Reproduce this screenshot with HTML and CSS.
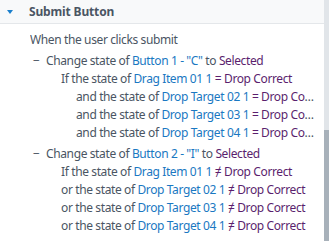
FILE: index.html
```html
<!DOCTYPE html>
<html>
<head>
<meta charset="utf-8">
<link rel="stylesheet" href="styles.css">
</head>
<body>
<div class="page">
  <div class="main">
    <div class="header">
      <span class="caret"></span>
      <span class="title">Submit Button</span>
    </div>
    <div class="body">
      <div class="line l0">When the user clicks submit</div>
      <div class="group">
        <div class="line l1"><span class="dash">−</span>Change state of <span class="obj">Button 1 - "C"</span> to <span class="val">Selected</span></div>
        <div class="line l2">If the state of <span class="obj">Drag Item 01 1</span> <span class="val">= Drop Correct</span></div>
        <div class="line l3">and the state of <span class="obj">Drop Target 02 1</span> <span class="val">= Drop Correct</span></div>
        <div class="line l3">and the state of <span class="obj">Drop Target 03 1</span> <span class="val">= Drop Correct</span></div>
        <div class="line l3">and the state of <span class="obj">Drop Target 04 1</span> <span class="val">= Drop Correct</span></div>
      </div>
      <div class="group">
        <div class="line l1"><span class="dash">−</span>Change state of <span class="obj">Button 2 - "I"</span> to <span class="val">Selected</span></div>
        <div class="line l2">If the state of <span class="obj">Drag Item 01 1</span> <span class="val">≠ Drop Correct</span></div>
        <div class="line l2">or the state of <span class="obj">Drop Target 02 1</span> <span class="val">≠ Drop Correct</span></div>
        <div class="line l2">or the state of <span class="obj">Drop Target 03 1</span> <span class="val">≠ Drop Correct</span></div>
        <div class="line l2">or the state of <span class="obj">Drop Target 04 1</span> <span class="val">≠ Drop Correct</span></div>
      </div>
    </div>
  </div>
  <div class="scrollbar"><div class="thumb"></div></div>
</div>
</body>
</html>
```

FILE: styles.css
```css
html, body {
  margin: 0;
  padding: 0;
  background: #ffffff;
}
body {
  font-family: "Noto Sans", "Open Sans", sans-serif;
  font-size: 12px;
  letter-spacing: -0.38px;
  color: #4a5563;
}
.page {
  display: flex;
  width: 329px;
  height: 241px;
  overflow: hidden;
}
.main {
  flex: 1;
  min-width: 0;
}
.header {
  background: #f8f9fa;
  border-bottom: 1px solid #e4e7ea;
  display: flex;
  align-items: center;
  box-sizing: border-box;
  height: 24px;
}
.caret {
  width: 0;
  height: 0;
  margin-left: 7px;
  border-left: 3.5px solid transparent;
  border-right: 3.5px solid transparent;
  border-top: 4px solid #1b7fcc;
}
.title {
  margin-left: 16px;
  font-weight: bold;
  letter-spacing: -0.15px;
  color: #4a5563;
}
.body {
  padding: 7px 7px 0 30px;
  display: flex;
  flex-direction: column;
  gap: 3px;
}
.group {
  display: flex;
  flex-direction: column;
}
.line {
  height: 18px;
  line-height: 18px;
  white-space: nowrap;
  overflow: hidden;
  text-overflow: ellipsis;
}
.l0 { padding-left: 0; }
.l1 { padding-left: 3px; }
.l2 { padding-left: 31px; }
.l3 { padding-left: 46px; }
.dash {
  display: inline-block;
  width: 13px;
}
.obj { color: #1a78c2; }
.val { color: #5b1f6e; }
.scrollbar {
  width: 5px;
  background: #e1e5e9;
  display: flex;
  flex-direction: column;
  justify-content: flex-end;
}
.thumb {
  height: 111px;
  background: #a8b1ba;
}
```
